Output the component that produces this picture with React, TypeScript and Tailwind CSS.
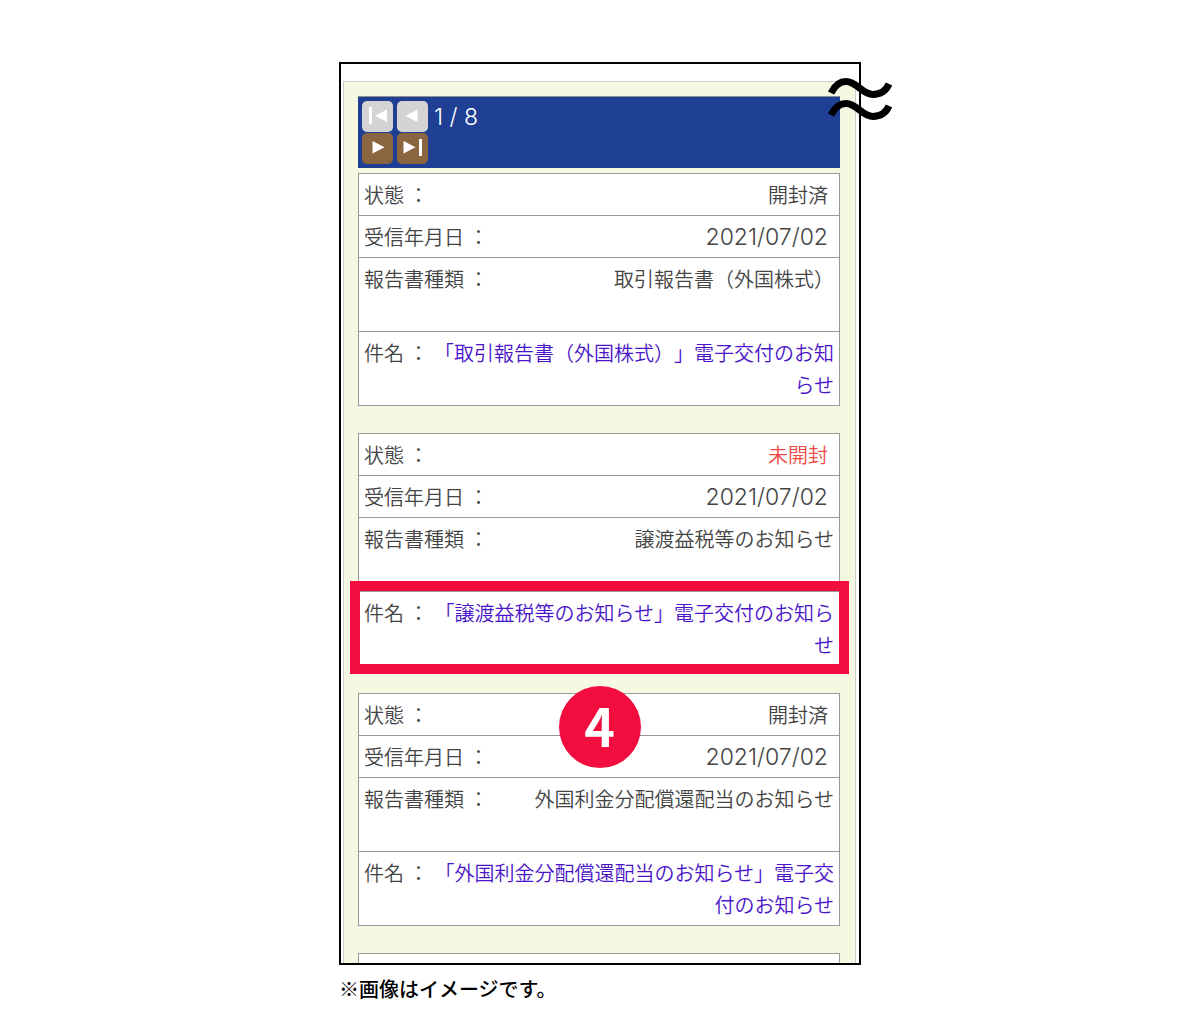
import type { ReactNode } from 'react'
import clsx from 'clsx'

type Report = {
  opened: boolean
  date: string
  kind: string
  title: string
  marker?: string
}

const reports: Report[] = [
  {
    opened: true,
    date: '2021/07/02',
    kind: '取引報告書（外国株式）',
    title: '「取引報告書（外国株式）」電子交付のお知らせ'
  },
  {
    opened: false,
    date: '2021/07/02',
    kind: '譲渡益税等のお知らせ',
    title: '「譲渡益税等のお知らせ」電子交付のお知らせ',
    marker: '4'
  },
  {
    opened: true,
    date: '2021/07/02',
    kind: '外国利金分配償還配当のお知らせ',
    title: '「外国利金分配償還配当のお知らせ」電子交付のお知らせ'
  }
]

function PagerButton({
  label,
  disabled,
  children
}: {
  label: string
  disabled?: boolean
  children: ReactNode
}) {
  return (
    <button
      type="button"
      aria-label={label}
      disabled={disabled}
      className={clsx('size-[31px] rounded-[5px] text-white', disabled ? 'bg-[#d4d4d4]' : 'bg-[#8a6540]')}
    >
      <svg viewBox="0 0 31 31" className="size-full" fill="currentColor" aria-hidden="true">
        {children}
      </svg>
    </button>
  )
}

function Pager() {
  return (
    <nav className="flex gap-1.5 border-t border-[#8f8f8f] bg-[#1f3f94] p-1">
      <div className="grid grid-cols-2 gap-x-1 gap-y-px">
        <PagerButton label="最初のページ" disabled>
          <path d="M7 6h3v17H7zM25 8.500v12.500L13 14.800z" />
        </PagerButton>
        <PagerButton label="前のページ" disabled>
          <path d="M20.500 8.500v12.500L8.500 14.800z" />
        </PagerButton>
        <PagerButton label="次のページ">
          <path d="M10.500 8v12.500l12-6.200z" />
        </PagerButton>
        <PagerButton label="最後のページ">
          <path d="M6.500 8v12.500l12-6.200zM22 6h3v17h-3z" />
        </PagerButton>
      </div>
      <span className="font-['Inter','Noto_Sans_CJK_JP',sans-serif] text-[23px] leading-8 font-light text-white">
        1 / 8
      </span>
    </nav>
  )
}

function Row({
  label,
  tall,
  children,
  overlay
}: {
  label: string
  tall?: boolean
  children: ReactNode
  overlay?: ReactNode
}) {
  return (
    <div
      className={clsx(
        'relative flex border-t border-[#999] px-[5px] pt-[5px] pb-1 first:border-t-0',
        tall && 'min-h-[74px]'
      )}
    >
      <dt className="shrink-0">{label} ：</dt>
      <dd className="min-w-0 flex-1 text-right">{children}</dd>
      {overlay}
    </div>
  )
}

function Marker({ text }: { text: string }) {
  return (
    <div className="pointer-events-none absolute -top-[11px] -right-[10px] -bottom-[9px] -left-[9px] z-10 border-10 border-[#f10e3e]">
      <span className="absolute top-full left-1/2 mt-[22px] flex size-[82px] -translate-x-1/2 items-center justify-center rounded-full bg-[#f10e3e] pb-1 text-[52px] leading-none font-bold text-white">
        {text}
      </span>
    </div>
  )
}

function ReportCard({ report }: { report: Report }) {
  return (
    <dl className="border border-[#999] bg-white">
      <Row label="状態">
        <span className={clsx('pr-1.5', !report.opened && 'text-[#f04a45]')}>
          {report.opened ? '開封済' : '未開封'}
        </span>
      </Row>
      <Row label="受信年月日">
        <span className="block pr-1.5 font-['Inter','Noto_Sans_CJK_JP',sans-serif] text-[23px] leading-8 font-light">
          {report.date}
        </span>
      </Row>
      <Row label="報告書種類" tall>
        {report.kind}
      </Row>
      <Row label="件名" tall overlay={report.marker && <Marker text={report.marker} />}>
        <a href="#" className="text-[#4a14c8]">
          {report.title}
        </a>
      </Row>
    </dl>
  )
}

// two wavy lines: the part of the screen between is left out
function Omission() {
  return (
    <svg
      viewBox="0 0 64 46"
      className="absolute top-3 -right-[33px] h-[46px] w-16"
      fill="none"
      stroke="#000"
      strokeWidth="7"
      aria-hidden="true"
    >
      <path d="M3 17C7 9 12 5.500 18 5.500C29 5.500 34 18.500 45 18.500C52 18.500 58 15 61 8" />
      <path d="M3 39C7 31 12 27.500 18 27.500C29 27.500 34 40.500 45 40.500C52 40.500 58 37 61 30" />
    </svg>
  )
}

export default function App() {
  return (
    <main className="min-h-screen bg-white pt-[62px] font-['Noto_Sans_CJK_JP',sans-serif] text-xl leading-8 text-[#444]">
      <figure lang="ja" className="mx-auto w-full max-w-[522px]">
        <div className="relative border-2 border-black pt-[17px] pr-[3px] pl-0.5">
          <div className="border border-b-0 border-[#ccc] bg-[#f7f8e2] pt-3.5 pr-[15px] pl-3.5">
            <Pager />
            <div className="mt-[5px] flex flex-col gap-[27px] font-[350] [text-spacing-trim:space-all]">
              {reports.map(report => (
                <ReportCard key={report.title} report={report} />
              ))}
              <div className="h-2.5 border border-b-0 border-[#999] bg-white" />
            </div>
          </div>
          <Omission />
        </div>
        <figcaption className="pt-2 font-medium text-black">※画像はイメージです。</figcaption>
      </figure>
    </main>
  )
}
